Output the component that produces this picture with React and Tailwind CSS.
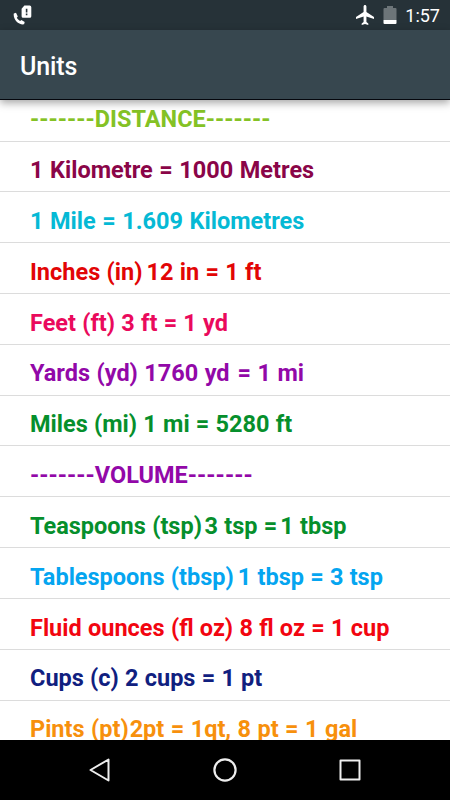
import React from 'react';

// Each row is split into the unit label and its conversion, gap is the space before a part
const units = [
  { id: 'distance', color: 'text-[#84c225]', words: '', parts: [{ text: '-------DISTANCE-------' }] },
  { id: 'km', color: 'text-[#8a0548]', words: '[word-spacing:0.7px]', parts: [{ text: '1 Kilometre = 1000 Metres' }] },
  { id: 'mile', color: 'text-[#05b9d5]', words: '[word-spacing:0.7px]', parts: [{ text: '1 Mile = 1.609 Kilometres' }] },
  { id: 'in', color: 'text-[#e20505]', words: '[word-spacing:0.5px]', parts: [{ text: 'Inches (in)' }, { text: '12 in = 1 ft', gap: 'ml-[4px]' }] },
  { id: 'ft', color: 'text-[#ea0a5c]', words: '[word-spacing:0.4px]', parts: [{ text: 'Feet (ft) 3 ft = 1 yd' }] },
  { id: 'yd', color: 'text-[#9208a8]', words: '[word-spacing:0.6px]', parts: [{ text: 'Yards (yd) 1760 yd' }, { text: '= 1 mi', gap: 'ml-[8px]' }] },
  { id: 'mi', color: 'text-[#068f2c]', words: '[word-spacing:0.4px]', parts: [{ text: 'Miles (mi) 1 mi = 5280 ft' }] },
  { id: 'volume', color: 'text-[#9208a8]', words: '', parts: [{ text: '-------VOLUME-------' }] },
  { id: 'tsp', color: 'text-[#068f2c]', words: '[word-spacing:0.5px]', parts: [{ text: 'Teaspoons (tsp)' }, { text: '3 tsp =', gap: 'ml-[2.5px]' }, { text: '1 tbsp', gap: 'ml-[3px]' }] },
  { id: 'tbsp', color: 'text-[#05a5f0]', words: '[word-spacing:0.4px]', parts: [{ text: 'Tablespoons (tbsp)' }, { text: '1 tbsp = 3 tsp', gap: 'ml-[4px]' }] },
  { id: 'floz', color: 'text-[#f20510]', words: '[word-spacing:0.45px]', parts: [{ text: 'Fluid ounces (fl oz) 8 fl oz = 1 cup' }] },
  { id: 'cup', color: 'text-[#10207f]', words: '[word-spacing:0.4px]', parts: [{ text: 'Cups (c) 2 cups = 1 pt' }] },
  { id: 'pt', color: 'text-[#f7900c]', words: '[word-spacing:0.6px]', parts: [{ text: 'Pints (pt)' }, { text: '2pt = 1qt, 8 pt = 1 gal', gap: 'ml-[1px]' }] },
];

const StatusBar = () => (
  <div className="h-[30px] shrink-0 bg-[#263238] flex items-center justify-between pl-[13px] pr-[10px] text-white">
    {/* phone handset with a SIM warning */}
    <svg width="20" height="20" viewBox="0 0 20 20" fill="currentColor">
      <path d="M.8 8.4 3 7.800l1.800 3.600-1 1.300c.9 1.500 1.800 2.400 3.300 3.300l1.300-.9 3.300 2-.6 2.200C5.500 20.300-.2 14.200.8 8.400Z" />
      <path fillRule="evenodd" d="M11.400.6h5.300q1.600 0 1.600 1.600v9q0 1.500-1.500 1.500h-6.700q-1.500 0-1.500-1.500V3.800ZM12.800 3.800v3.700h1.600V3.800Zm0 4.800v1.600h1.600V8.600Z" />
    </svg>
    <div className="flex items-center">
      <svg width="18" height="20" viewBox="2 2 19 20" preserveAspectRatio="none" fill="currentColor">
        <path d="M21 16v-2l-8-5V3.5C13 2.670 12.330 2 11.500 2S10 2.670 10 3.500V9l-8 5v2l8-2.500V19l-2 1.500V22l3.500-1 3.500 1v-1.500L13 19v-5.500l8 2.500Z" />
      </svg>
      <svg className="ml-[9px]" width="14" height="20" viewBox="0 0 14 20">
        <path fill="#6c7579" d="M4 1h6v2h2.500q1 0 1 1v11H.5V4q0-1 1-1H4Z" />
        <path fill="white" d="M.5 15h13v3q0 1-1 1h-11q-1 0-1-1Z" />
      </svg>
      <span className="ml-[8px] mt-[1px] text-[18px] leading-none font-[450]">1:57</span>
    </div>
  </div>
);

const UnitRow = ({ unit }) => (
  <li className={`h-[50.83px] shrink-0 flex items-center border-b border-[#dcdcdc] pl-[30px] pt-[7.5px] text-[23.5px] leading-[28px] font-bold whitespace-pre ${unit.words} ${unit.color}`}>
    {unit.parts.map((part) => (
      <span key={part.text} className={part.gap}>{part.text}</span>
    ))}
  </li>
);

const NavBar = () => (
  <nav className="h-[60px] shrink-0 bg-black flex items-center justify-around px-[37px]">
    <svg width="26" height="26" viewBox="0 0 26 26" fill="none" stroke="#eeeeee" strokeWidth="2" strokeLinejoin="round">
      <path d="M21.500 2.500v21L3.500 13Z" />
    </svg>
    <svg width="26" height="26" viewBox="0 0 26 26" fill="none" stroke="#eeeeee" strokeWidth="2.200">
      <circle cx="13" cy="13" r="10.600" />
    </svg>
    <svg width="26" height="26" viewBox="0 0 26 26" fill="none" stroke="#eeeeee" strokeWidth="2" strokeLinejoin="round">
      <rect x="3.500" y="3.500" width="19" height="19" />
    </svg>
  </nav>
);

const App = () => {
  return (
    <div className="w-[450px] h-[800px] flex flex-col overflow-hidden bg-white font-['Roboto',sans-serif]">
      <StatusBar />
      <header className="relative z-10 h-[70px] shrink-0 bg-[#37474f] border-b border-[#05070d] flex items-center pl-[20px] pt-[4px] shadow-[0_3px_8px_rgba(0,0,0,0.35)]">
        <h1 className="text-[25px] leading-none font-medium tracking-[-0.1px] text-white">Units</h1>
      </header>

      {/* list is scrolled a little, the first row sits partly under the header */}
      <div className="flex-1 min-h-0 overflow-hidden">
        <ul className="-mt-[9.33px] flex flex-col">
          {units.map((unit) => (
            <UnitRow key={unit.id} unit={unit} />
          ))}
        </ul>
      </div>

      <NavBar />
    </div>
  );
};

export default App;
